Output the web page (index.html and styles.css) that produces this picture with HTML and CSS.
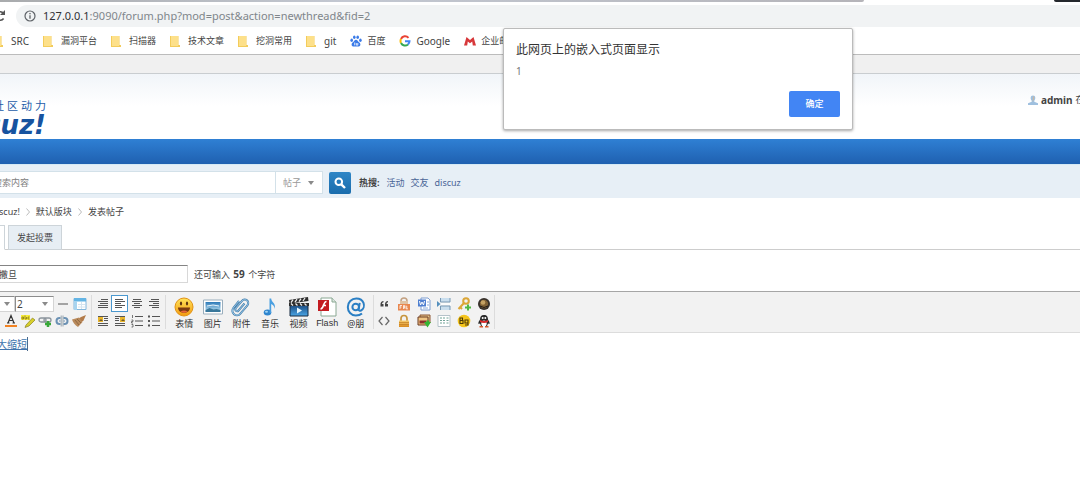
FILE: index.html
```html
<!DOCTYPE html>
<html lang="zh-CN">
<head>
<meta charset="utf-8">
<title>发表帖子 - Discuz!</title>
<link rel="stylesheet" href="styles.css">
</head>
<body>
<svg class="defs" aria-hidden="true">
  <defs>
    <linearGradient id="face" x1="0" y1="0" x2="0" y2="1"><stop offset="0" stop-color="#ffe45a"/><stop offset="1" stop-color="#f39a10"/></linearGradient>
    <linearGradient id="sky" x1="0" y1="0" x2="0" y2="1"><stop offset="0" stop-color="#2c79b8"/><stop offset="1" stop-color="#c7e8f5"/></linearGradient>
    <linearGradient id="film" x1="0" y1="0" x2="0" y2="1"><stop offset="0" stop-color="#1b4a80"/><stop offset="1" stop-color="#4aa6e6"/></linearGradient>
    <linearGradient id="gold" x1="0" y1="0" x2="0" y2="1"><stop offset="0" stop-color="#f8cf72"/><stop offset="1" stop-color="#d98a1e"/></linearGradient>
    <symbol id="folder" viewBox="0 0 10 12"><path d="M0 1h8.500v9h1.500v2H0z" fill="#f3cc5b"/><path d="M1 1h7v10H1z" fill="#fde08a"/></symbol>
    <symbol id="caret" viewBox="0 0 6 4"><path d="M0 0h6L3 4z" fill="#8a8a8a"/></symbol>
  </defs>
</svg>

<header class="browser">
  <div class="tabstrip"><span class="tabs-idle"></span><span class="tabs-end"></span></div>
  <div class="address-row">
    <button class="reload" aria-label="重新加载"><svg viewBox="0 0 12 12"><path d="M9.600 8.500A4.300 4.300 0 1 1 9.500 3.300" fill="none" stroke="#555" stroke-width="1.500"/><path d="M11 0v5H6z" fill="#555"/></svg></button>
    <div class="address">
      <svg class="info" viewBox="0 0 12 12"><circle cx="6" cy="6" r="5" fill="none" stroke="#5f6368" stroke-width="1.200"/><path d="M6 5.200v3.600M6 3v1.300" stroke="#5f6368" stroke-width="1.300"/></svg>
      <span class="url"><b>127.0.0.1</b>:9090/forum.php?mod=post&amp;action=newthread&amp;fid=2</span>
    </div>
  </div>
  <nav class="bookmarks">
    <a href="#" class="bm-src"><svg class="folder"><use href="#folder"/></svg>SRC</a>
    <a href="#" class="bm-cjk"><svg class="folder"><use href="#folder"/></svg>漏洞平台</a>
    <a href="#" class="bm-cjk"><svg class="folder"><use href="#folder"/></svg>扫描器</a>
    <a href="#" class="bm-cjk"><svg class="folder"><use href="#folder"/></svg>技术文章</a>
    <a href="#" class="bm-cjk"><svg class="folder"><use href="#folder"/></svg>挖洞常用</a>
    <a href="#"><svg class="folder"><use href="#folder"/></svg>git</a>
    <a href="#" class="bm-cjk bm-site"><svg class="site" viewBox="0 0 12 12" fill="#3b7be8"><ellipse cx="1.700" cy="5.300" rx="1.300" ry="1.700"/><ellipse cx="4.300" cy="2.200" rx="1.300" ry="1.800"/><ellipse cx="7.700" cy="2.200" rx="1.300" ry="1.800"/><ellipse cx="10.400" cy="5.300" rx="1.300" ry="1.700"/><path d="M6 4.800c1.500 0 2 1.700 3.300 2.800 2 1.600 1 4.200-1 4-1.600-.2-3-.2-4.600 0-2 .2-3-2.400-1-4C4 6.500 4.500 4.800 6 4.800z"/><path d="M4.700 7.500v2.800M6.300 8v2.100h1.500V8" fill="none" stroke="#fff" stroke-width=".8"/></svg>百度</a>
    <a href="#" class="bm-site"><svg class="site" viewBox="0 0 12 12" fill="none" stroke-width="2"><path d="M2 4A4.500 4.500 0 0 1 9.500 2.800" stroke="#ea4335"/><path d="M2 8a4.500 4.500 0 0 1 0-4" stroke="#fbbc05"/><path d="M9 9.400A4.500 4.500 0 0 1 2 8" stroke="#34a853"/><path d="M6 6.200h4.500A4.500 4.500 0 0 1 9 9.400" stroke="#4285f4"/></svg>Google</a>
    <a href="#" class="bm-cjk bm-site"><svg class="site" viewBox="0 0 12 12"><path d="M0 10.500 2.500 2 6 5l3.500-3L12 10.500H8.800L8.200 6.500 6 8.300 3.800 6.500 3.200 10.500z" fill="#d7373a"/></svg>企业邮箱</a>
  </nav>
</header>

<div class="topbar"></div>

<div class="head">
  <a href="#" class="logo"><span class="slogan"><span>社</span><span>区</span><span>动</span><span>力</span></span><span class="brand">cuz!</span></a>
  <div class="user"><svg viewBox="0 0 10 10"><path d="M5 .5c3 0 2.700 3.800 1.300 5.200v1L10 8.300V10H0V8.300l3.700-1.600v-1C2.300 4.300 2 .5 5 .5z" fill="#9fc0df"/><path d="M5 1c1.700 0 1.500 3 .3 4.500L4.500 7" fill="#c9b8a4"/></svg><a href="#">admin</a><span>在线</span></div>
</div>

<div class="mainnav"></div>

<form class="search">
  <input type="text" class="search-text" aria-label="搜索内容" placeholder="搜索内容">
  <label class="search-kind"><select aria-label="搜索类型"><option>帖子</option></select><svg class="caret"><use href="#caret"/></svg></label>
  <button type="button" class="search-go" aria-label="搜索"><svg viewBox="0 0 12 12"><circle cx="4.800" cy="4.800" r="3.300" fill="none" stroke="#fff" stroke-width="2"/><path d="m7.300 7.300 3.700 3.700" stroke="#fff" stroke-width="2.400"/></svg></button>
  <strong>热搜:</strong>
  <a href="#">活动</a><a href="#">交友</a><a href="#">discuz</a>
</form>

<nav class="crumbs">
  <a href="#">scuz!</a><svg viewBox="0 0 4 8"><path d="m.5.500 3 3.500-3 3.500" fill="none" stroke="#bbb"/></svg><a href="#">默认版块</a><svg viewBox="0 0 4 8"><path d="m.5.500 3 3.500-3 3.500" fill="none" stroke="#bbb"/></svg><a href="#">发表帖子</a>
</nav>

<nav class="posttabs"><a href="#" class="current" aria-label="发表帖子"></a><a href="#">发起投票</a></nav>

<div class="subject">
  <input type="text" aria-label="标题" value="撒旦">
  <span>还可输入 <b>59</b> 个字符</span>
</div>

<div class="toolbar">
  <div class="group text-tools">
    <div class="row">
      <label class="pick font"><select aria-label="字体"><option></option></select><svg class="caret"><use href="#caret"/></svg></label>
      <label class="pick size"><select aria-label="字号"><option>2</option></select><svg class="caret"><use href="#caret"/></svg></label>
      <button aria-label="分隔线"><svg viewBox="0 0 14 14"><path d="M2 7h10" stroke="#555"/></svg></button>
      <button aria-label="表格"><svg viewBox="0 0 14 14"><path d="M1 1.500h12v11H1z" fill="#fff" stroke="#83b6dc"/><path d="M1 1h12v3.500H1z" fill="#63b4e4"/><path d="M1 4h3v9H1z" fill="#a8d4ef"/><path d="M5 7.500h7M5 10h7M8.500 5v7" stroke="#d5e4ef"/></svg></button>
    </div>
    <div class="row colors">
      <button aria-label="文字颜色"><svg viewBox="0 0 14 14"><path d="M4 9 7 1.500 10 9M5 6.500h4M3 9h2.500M8.500 9H11" fill="none" stroke="#333" stroke-width="1.200"/><path d="M1 11h12v2H1z" fill="#f28322"/></svg></button>
      <button aria-label="背景颜色"><svg viewBox="0 0 14 14"><path d="M0 1h9v5H0z" fill="#f7ec3b"/><path d="M1 5V3h1.500v2zM4 1.500V5h1.500V3M8.500 3H7v2h1.500" fill="none" stroke="#877611" stroke-width=".8"/><path d="m5 11 6.500-7L14 6l-6 6-4 1.500z" fill="#d7cf2b" stroke="#8b8320" stroke-width=".7"/></svg></button>
      <button aria-label="添加链接"><svg viewBox="0 0 14 14"><rect x="1" y="4" width="7" height="4" rx="2" fill="none" stroke="#8b949c" stroke-width="1.300"/><rect x="6" y="4" width="7" height="4" rx="2" fill="none" stroke="#8b949c" stroke-width="1.300"/><path d="M10 7v6M7 10h6" stroke="#38a838" stroke-width="2.500"/></svg></button>
      <button aria-label="移除链接"><svg viewBox="0 0 14 14"><path d="M5.500 4H4.500a3 3 0 0 0 0 6h1M8.500 4h1a3 3 0 0 1 0 6h-1" fill="none" stroke="#6b91b4" stroke-width="2"/><path d="M4 7h1.500M8.500 7H10" stroke="#6b91b4"/><path d="M6.200 1.500v11M8 1.500v11" stroke="#7f8f9c" stroke-width=".8"/></svg></button>
      <button aria-label="清除格式"><svg viewBox="0 0 14 14"><path d="M14 1l-2.500 5.500L9 8.500 6 5l3-2z" fill="#b27b4a"/><path d="M7 3.500 0 5.500c1 3 3 5.500 6 7.500L10.500 8z" fill="#b98a5c"/><path d="m3 6 4 5M5 5l4 4" stroke="#84613e" stroke-width=".8"/></svg></button>
    </div>
  </div>
  <div class="group para-tools">
    <button aria-label="自动排版"><svg viewBox="0 0 14 14"><path d="M5 2.500h7M2 4.500h10M4 6.500h8M2 8.500h10M2 10.500h10" stroke="#555"/></svg></button>
    <button class="on" aria-label="左对齐"><svg viewBox="0 0 14 14"><path d="M2 2.500h8M2 4.500h10M2 6.500h6M2 8.500h10M2 10.500h7" stroke="#555"/></svg></button>
    <button aria-label="居中"><svg viewBox="0 0 14 14"><path d="M3 2.500h8M2 4.500h10M4 6.500h6M2 8.500h10M4 10.500h6" stroke="#555"/></svg></button>
    <button aria-label="右对齐"><svg viewBox="0 0 14 14"><path d="M4 2.500h8M2 4.500h10M6 6.500h6M2 8.500h10M5 10.500h7" stroke="#555"/></svg></button>
    <button aria-label="左浮动"><svg viewBox="0 0 14 14"><path d="M2 2.500h10M8 4.500h4M8 6.500h4M2 9.500h10M2 11.500h10" stroke="#555"/><path d="M2 3h5v5H2z" fill="#e9b52b"/><path d="M3 7l2-2 2 2z" fill="#6d5a2a"/></svg></button>
    <button aria-label="右浮动"><svg viewBox="0 0 14 14"><path d="M2 2.500h10M2 4.500h4M2 6.500h4M2 9.500h10M2 11.500h10" stroke="#555"/><path d="M7 3h5v5H7z" fill="#e9b52b"/><path d="M8 7l2-2 2 2z" fill="#6d5a2a"/></svg></button>
    <button aria-label="排序列表"><svg viewBox="0 0 14 14"><path d="M5 2.500h8M5 7h8M5 11.500h8" stroke="#555"/><path d="M2.500 1v3M1.500 6h1.500v1.500H1.500V9H3M1.500 10.500H3V13H1.500" fill="none" stroke="#555" stroke-width=".8"/></svg></button>
    <button aria-label="无序列表"><svg viewBox="0 0 14 14"><path d="M5 2.500h8M5 7h8M5 11.500h8" stroke="#555"/><path d="M1 1.500h2v2H1zM1 6h2v2H1zM1 10.500h2v2H1z" fill="#555"/></svg></button>
  </div>
  <div class="group media-tools">
    <button><svg viewBox="0 0 20 20"><circle cx="10" cy="10" r="9" fill="url(#face)" stroke="#e29214"/><path d="M4 10.500h12c0 7-12 7-12 0z" fill="#7c3b10"/><path d="M6.500 14.500q3.500-2 7 0-3.500 2.500-7 0z" fill="#e9653b"/><ellipse cx="7" cy="6.500" rx="1.100" ry="2" fill="#5e3410"/><ellipse cx="13" cy="6.500" rx="1.100" ry="2" fill="#5e3410"/></svg>表情</button>
    <button><svg viewBox="0 0 20 20"><path d="M.5 3h19v14H.5z" fill="#fff" stroke="#9aaebd"/><path d="M2.500 5h15v10h-15z" fill="url(#sky)"/><path d="m2.500 13 4-2 4 1.500 3-.5 4 1v2h-15z" fill="#38779b"/><path d="M4 9q6-2 12 0" stroke="#e9f5fb" fill="none"/></svg>图片</button>
    <button><svg viewBox="0 0 20 20"><path d="m13.500 6.500-6 7a1.800 1.800 0 0 1-2.800-2.300L11 3.800a3.500 3.500 0 0 1 5.400 4.500l-7 8.300a4.500 4.500 0 0 1-7-5.800L8 4" fill="none" stroke="#4a7fa9" stroke-width="2"/><path d="m13.500 6.500-6 7a1.800 1.800 0 0 1-2.800-2.300L11 3.800a3.500 3.500 0 0 1 5.400 4.500l-7 8.300a4.500 4.500 0 0 1-7-5.800L8 4" fill="none" stroke="#9accee" stroke-width=".9"/></svg>附件</button>
    <button><svg viewBox="0 0 20 20"><ellipse cx="7.500" cy="15.500" rx="3.800" ry="3" fill="#2f86cf"/><path d="M9.500 1.500h1.700c0 4 5.300 4.500 3.300 10.500 0-3-1.500-4-3.300-5v9H9.500z" fill="#4a9fe0"/><ellipse cx="6.500" cy="14.700" rx="1.500" ry="1" fill="#a3d5f6"/></svg>音乐</button>
    <button><svg viewBox="0 0 20 20"><path d="M1 8h18v11H1z" fill="url(#film)" stroke="#172b40"/><path d="M0 3 19 0l.5 4L.5 6.500zM0 6h20v3H0z" fill="#2d2d2d"/><path d="m2 5.700 2-3M6 5.200l2-3M10 4.600l2-3M14 4l2-3M2 6.500l2 2M6.500 6.500l2 2M11 6.500l2 2M15.500 6.500l2 2" stroke="#eee" stroke-width="1.300"/><path d="m8 10.500 5 3-5 3z" fill="#e9f8ff"/></svg>视频</button>
    <button class="latin-label"><svg viewBox="0 0 20 20"><path d="M4 1h11l4 4v14H4z" fill="#fff" stroke="#8aa893"/><path d="M15 1v4h4" fill="#dce6df" stroke="#8aa893"/><path d="M1 3h11v11H1z" fill="#c31b20"/><path d="M9.500 4.500C6 4.500 7 12 3.500 12M5.500 8.500h3.500" fill="none" stroke="#fff" stroke-width="1.600"/></svg>Flash</button>
    <button><svg viewBox="0 0 20 20"><circle cx="9.700" cy="10" r="3.300" fill="none" stroke="#2b7fc4" stroke-width="2"/><path d="M13.700 5.800 12.700 12c-.2 2 1.200 2 2.300 1.500 2.500-1.200 3.500-4.500 2.600-7.300C16.400 3 13.500 1.500 10.300 1.500 5.500 1.500 1.800 5.300 1.800 10s3.400 8.500 8 8.500c2.400 0 4.600-.6 6.200-2" fill="none" stroke="#2b7fc4" stroke-width="2"/></svg>@朋</button>
  </div>
  <div class="group extra-tools">
    <button aria-label="引用"><svg viewBox="0 0 14 14"><path d="M6.500 4C4.500 4 3.500 5.500 3.500 7v2.500h3V7H5q0-1.500 1.500-1.800zM11 4C9 4 8 5.500 8 7v2.500h3V7H9.500q0-1.500 1.500-1.800z" fill="#444"/></svg></button>
    <button aria-label="免费信息"><svg viewBox="0 0 14 14"><path d="M4 7V4a3 3 0 0 1 6 0v3" fill="none" stroke="#c3a182" stroke-width="1.500"/><path d="M3 4h8v4H3z" fill="#dfc3a5"/><path d="M1 7h12v6.500H1z" fill="#e8874f"/><path d="M3 12V8.500h2M3 10h1.500M6.500 12V8.500h1v3M9 8.500v3.300h2M9 10h1.500" fill="none" stroke="#fff" stroke-width=".8"/></svg></button>
    <button aria-label="粘贴 Word"><svg viewBox="0 0 14 14"><path d="M4 1h7l2 2v10H4z" fill="#fff" stroke="#7f9ed0"/><path d="M1 2.500h8v7H1z" fill="#4e7fd0"/><path d="m2.500 4 1 4L5 5l1.500 3 1-4" fill="none" stroke="#fff"/><path d="M6 11h5M10 5h2M10 8h2" stroke="#8badde"/></svg></button>
    <button aria-label="分页"><svg viewBox="0 0 14 14"><path d="M3.500 1v4H13V1M3.500 13V9H13v4" fill="#c9deee" stroke="#7999b4"/><path d="M4 7h10" stroke="#fff" stroke-width="1.500"/><path d="m0 4 3.500 3L0 10z" fill="#548fbd"/></svg></button>
    <button aria-label="密码"><svg viewBox="0 0 14 14"><circle cx="9" cy="4" r="2.800" fill="none" stroke="#dba637" stroke-width="2"/><path d="m7 6-5.500 6M3 10l2 2" stroke="#dba637" stroke-width="2"/><path d="M11 7.500v6M8 10.500h6" stroke="#50b843" stroke-width="2"/></svg></button>
    <button aria-label="背景音乐"><svg viewBox="0 0 14 14"><circle cx="7" cy="7" r="6" fill="#37312c"/><circle cx="7" cy="7" r="4.200" fill="#806135"/><circle cx="6" cy="5.500" r="2.300" fill="#c5a264"/><path d="M3 9q4 3 8 0" stroke="#211b17" fill="none"/></svg></button>
    <button aria-label="代码"><svg viewBox="0 0 14 14"><path d="M5.500 3 2 7l3.500 4M8.500 3 12 7l-3.500 4" fill="none" stroke="#666" stroke-width="1.200"/></svg></button>
    <button aria-label="隐藏内容"><svg viewBox="0 0 14 14"><path d="M4 7V4.500a3 3 0 0 1 6 0V7" fill="none" stroke="#c7953f" stroke-width="1.700"/><path d="M2 6.500h10V13H2z" fill="url(#gold)"/><path d="M2 8.500h10M2 10.500h10" stroke="#b9741c" stroke-width=".6"/></svg></button>
    <button aria-label="下载远程图片"><svg viewBox="0 0 14 14"><path d="M3 1h10v8H3z" fill="#e3c288" stroke="#8b5530"/><path d="M1 3h10v8H1z" fill="#f0c684" stroke="#6b3a22"/><path d="M2.500 6.500h7v3h-7z" fill="#8b302c"/><path d="M8 8h1.500V6.500H12V8h2l-3.500 5.500L7 8z" fill="#35b534"/></svg></button>
    <button aria-label="目录"><svg viewBox="0 0 14 14"><path d="M1 1.500h12v11H1z" fill="#fff" stroke="#b5c2c9"/><path d="M3 4h2M6 4h2M9.500 4h2M3 6.500h2M6 6.500h2M9.500 6.500h2M3 9h2M6 9h2M9.500 9h2" stroke="#71a397"/></svg></button>
    <button aria-label="帖子背景"><svg viewBox="0 0 14 14"><circle cx="7" cy="7" r="6.300" fill="#f4c51d"/><path d="M3 4h2.500v2.500H3zM3 6.500h3V9.500H3zM11 6H8v3h3M11 5.500v5.500H8" fill="none" stroke="#4c3907" stroke-width="1.100"/></svg></button>
    <button aria-label="QQ 表情"><svg viewBox="0 0 14 14"><path d="M7 1c3 0 4 2 4 4.500 1 1.500 2 3 1.500 4.500L11 9.500 10 12H4L3 9.500 1.500 10C1 8.500 2 7 3 5.500 3 3 4 1 7 1z" fill="#292929"/><ellipse cx="7" cy="9.500" rx="2.700" ry="3" fill="#fff"/><path d="M3 6q4 2 8 0v2q-4 2-8 0z" fill="#d92b2b"/><circle cx="5.700" cy="4" r="1" fill="#fff"/><circle cx="8.300" cy="4" r="1" fill="#fff"/><path d="M2.500 12H6v1.500H2.500zM8 12h3.500v1.500H8z" fill="#d9572a"/></svg></button>
  </div>
</div>

<main class="editor" contenteditable="true"><a href="#">大缩短</a></main>

<div class="dialog" role="alertdialog" aria-labelledby="dlg-title">
  <h1 id="dlg-title">此网页上的嵌入式页面显示</h1>
  <p>1</p>
  <button>确定</button>
</div>
</body>
</html>
```
FILE: styles.css
```css
* { box-sizing: border-box; }
body {
  margin: 0;
  min-height: 100vh;
  overflow: hidden;
  position: relative;
  background: #fff;
  color: #444;
  font: 9px/14px "Noto Sans", "Noto Sans CJK SC", sans-serif;
}
a { color: inherit; text-decoration: none; }
button { border: 0; padding: 0; margin: 0; background: none; font: inherit; color: inherit; }
input, select { font: inherit; color: inherit; border-radius: 0; }
svg { display: block; flex: none; }
.defs { position: absolute; width: 0; height: 0; }
.caret { width: 6px; height: 4px; pointer-events: none; }

/* Browser chrome */
.tabstrip { display: flex; justify-content: space-between; height: 5px; padding-bottom: 3px; }
.tabs-idle { width: 80%; background: linear-gradient(90deg, #a9abad, #c3c8d2 40%, #b5b4b9); border-bottom-right-radius: 3px; }
.tabs-end { width: 26px; background: #25282d; border-bottom-left-radius: 3px; }
.address-row { display: flex; align-items: center; height: 22px; }
.reload { width: 16px; }
.reload svg { width: 12px; height: 12px; margin-left: -6px; }
.address { flex: 1; display: flex; align-items: center; gap: 7px; height: 22px; padding-left: 8px; background: #f1f3f4; border-radius: 11px 0 0 11px; }
.info { width: 12px; height: 12px; }
.url { font-size: 11px; color: #80868b; }
.url b { font-weight: 400; color: #303134; }
.bookmarks { display: flex; align-items: center; gap: 14px; height: 28px; border-bottom: 1px solid #bcbcbc; color: #444; white-space: nowrap; }
.bookmarks a { display: flex; align-items: center; gap: 8px; font-size: 10px; }
.bookmarks .bm-cjk { font-size: 9px; }
.bookmarks .bm-src { margin-left: -7px; }
.bookmarks .bm-site { gap: 5px; }
.folder { width: 10px; height: 12px; }
.site { width: 12px; height: 12px; }

/* Site header */
.topbar { height: 19px; background: #f0f0f0; border-bottom: 1px solid #c9cdd0; }
.head { display: flex; justify-content: space-between; height: 65px; background: linear-gradient(#f1f5f9, #fff 50%); overflow: hidden; }
.logo { padding-top: 25px; color: #1d5ca8; }
.slogan { display: flex; gap: 3px; margin-left: -7px; font-size: 11px; line-height: 14px; }
.brand { display: block; margin-left: -15px; font: italic 700 26px/24px "DejaVu Sans", sans-serif; color: #17539f; }
.user { display: flex; gap: 3px; width: 52px; height: 14px; margin-top: 19px; align-items: center; overflow: hidden; white-space: nowrap; }
.user svg { width: 10px; height: 10px; }
.user a { font-size: 10px; font-weight: 700; }
.mainnav { height: 25px; background: linear-gradient(#2f80d4, #1f60b0); }

.search { display: flex; align-items: center; height: 34px; padding-top: 2px; background: #e7eff6; border-top: 1px solid #d5e9f5; }
.search-text { width: 284px; height: 23px; padding: 0; margin-left: -8px; border: 1px solid #d3e1e9; background: #fff; }
.search-text::placeholder { color: #808080; opacity: 1; }
.search-kind, .pick { display: flex; align-items: center; background: #fff; }
.search-kind { width: 47px; height: 23px; padding: 0 8px 0 7px; border: 1px solid #d3e1e9; border-left: 0; color: #999; }
.search-kind select, .pick select { flex: 1; min-width: 0; padding: 0; border: 0; background: none; appearance: none; }
.search-go { display: grid; place-items: center; width: 22px; height: 22px; margin: 0 8px 0 6px; border-radius: 2px; background: linear-gradient(#2f86c6, #1a6cac); }
.search-go svg { width: 12px; height: 12px; }
.search strong { margin-right: 1px; font-weight: 700; }
.search a { margin-left: 6px; color: #496596; }

.crumbs { display: flex; align-items: center; gap: 6px; height: 27px; }
.crumbs a:first-child { margin-left: -1px; }
.crumbs svg { width: 4px; height: 8px; }

.posttabs { display: flex; gap: 3px; height: 25px; border-bottom: 1px solid #cdcdcd; }
.posttabs a { height: 25px; padding: 5px 8px; background: #e7eef4; border: 1px solid #cdd4d9; }
.posttabs .current { width: 5px; padding: 0; background: #fff; border-left: 0; border-bottom-color: #fff; }

.subject { display: flex; align-items: center; gap: 6px; height: 18px; margin: 15px 0 8px; }
.subject input { width: 190px; height: 18px; margin-left: -2px; padding: 0; border: 1px solid #d8d8d8; border-top: 1px solid #848484; background: #fff; }
.subject b { margin: 0 1px; font-size: 10px; }

/* Editor */
.toolbar { display: flex; height: 42px; padding: 3px 0; background: #f2f2f2; border-top: 1px solid #a6a6a6; border-bottom: 1px solid #dcdcdc; }
.group { flex: none; border-right: 1px solid #dcdcdc; }
.toolbar button { display: grid; place-items: center; height: 17px; }
.toolbar button svg { width: 14px; height: 14px; }
.row { display: flex; height: 17px; align-items: center; }
.row button { width: 17px; }
.text-tools { width: 92px; }
.colors { padding-left: 2px; }
.pick { height: 16px; border: 1px solid #d4d4d4; border-top-color: #8c8c8c; }
.pick.font { width: 15px; border-left: 0; padding-right: 4px; }
.pick.size { width: 39px; padding: 0 5px 0 1px; border-left-color: #8c8c8c; font-size: 10px; }
.para-tools { display: grid; grid-template-columns: repeat(4, 17px); align-content: start; padding: 0 3px 0 2px; }
.toolbar .on { background: #fff; border: 1px solid #4b98cf; }
.media-tools { display: grid; grid-template-columns: repeat(7, 1fr); width: 208px; padding: 2px 3px 0 4px; }
.toolbar .media-tools button { display: flex; flex-direction: column; align-items: center; height: 34px; line-height: 13px; white-space: nowrap; color: #333; }
.toolbar .media-tools svg { width: 20px; height: 20px; }
.toolbar .media-tools .latin-label { font-family: "Liberation Sans", sans-serif; }
.extra-tools { display: grid; grid-template-columns: repeat(6, 20px); align-content: start; }

.editor { padding: 4px 0; outline: none; font-size: 10px; line-height: 14px; }
.editor a { display: inline-block; margin-left: -3px; border-right: 1px solid #4d6a8c; color: #4174ad; text-decoration: underline; }

/* Page alert */
.dialog { position: absolute; top: 28px; left: 503px; width: 350px; padding: 13px 12px 12px; background: #fff; border: 1px solid #bbb; border-radius: 2px; box-shadow: 0 1px 3px rgba(0, 0, 0, .35); }
.dialog h1 { margin: 0 0 6px; font-size: 12px; line-height: 16px; font-weight: 400; color: #333; }
.dialog p { margin: 0 0 13px; font-size: 10px; line-height: 14px; color: #757575; }
.dialog button { display: block; width: 51px; height: 26px; margin-left: auto; border-radius: 2px; background: #4285f4; color: #fff; font-weight: 500; }
```
